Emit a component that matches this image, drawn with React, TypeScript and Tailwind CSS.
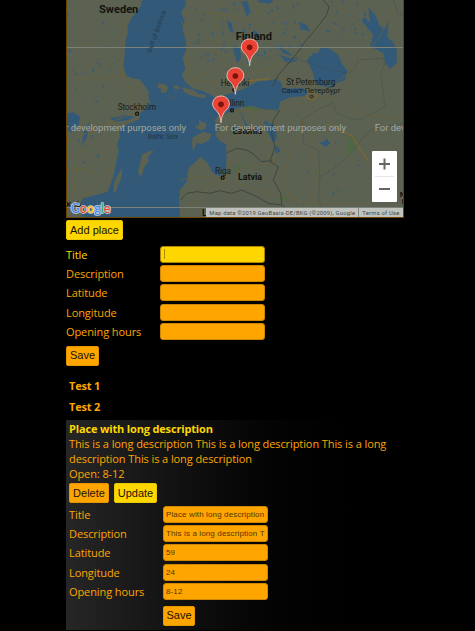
import React from "react";

const ROADS = [
  "M70 0 L78 60 L95 120 L82 170 L88 205",
  "M200 60 L195 110 L189 150 L187 228 L205 260 L215 310 L232 340",
  "M30 245 L50 232 L80 238 L130 232 L187 230",
  "M232 340 L190 350 L150 375 L90 400 L65 440 L50 500 L40 590 L20 640",
  "M150 420 L135 460 L140 520 L95 570 L60 600",
  "M20 430 L60 410 L120 380 L190 350",
  "M365 60 L380 130 L378 195 L405 240 L460 245 L520 255",
  "M405 240 L450 210 L480 180 L530 220 L525 265",
  "M475 0 L480 40 L465 90 L478 180",
  "M520 255 L570 240 L630 235 L700 235",
  "M530 220 L600 215 L700 180 L740 150",
  "M570 190 L560 120 L600 60 L590 0",
  "M380 0 L430 40 L480 40 L560 60",
  "M640 20 L650 80 L630 130",
  "M755 290 L700 325 L660 330 L600 330 L520 335",
  "M755 290 L790 340 L830 385 L880 420 L920 480 L960 540",
  "M755 290 L730 350 L725 390 L690 450 L670 540 L700 620",
  "M755 290 L840 300 L900 340 L1030 360",
  "M755 290 L860 225 L900 180 L960 110 L1000 20",
  "M520 335 L530 390 L510 450 L500 530",
  "M488 535 L440 560 L400 610 L375 650",
  "M488 535 L560 500 L640 490",
  "M488 535 L560 560 L650 585 L760 610 L930 610",
  "M488 535 L510 590 L540 650",
  "M360 540 L410 530 L488 535",
  "M560 320 L600 370 L640 490",
  "M760 390 L750 470 L770 540 L745 620",
  "M0 510 L60 505 L110 520",
];

const BORDERS = [
  "M790 0 L807 20 L800 45 L765 90 L735 125 L715 155 L690 185 L655 225 L638 258",
  "M502 458 L530 445 L560 450 L580 462 L605 485 L635 482",
  "M660 330 L640 360 L635 400 L645 440 L630 485 L655 500 L640 540 L662 580 L665 615 L690 635 L715 625 L725 654",
  "M362 600 L380 580 L410 575 L450 580 L480 572 L515 580 L545 570 L590 590 L625 610 L665 615",
];

const LAKES = [
  "M785 140 L810 146 L835 165 L845 190 L862 212 L855 240 L832 248 L812 265 L785 258 L765 245 L758 215 L740 182 L760 158 L772 160 Z",
  "M925 22 L948 48 L960 80 L975 85 L985 62 L982 110 L1000 128 L1010 150 L1010 190 L990 206 L976 190 L970 160 L930 138 L940 105 L905 62 L912 50 L930 70 Z",
  "M618 375 L635 370 L647 382 L650 415 L640 428 L622 396 Z",
  "M642 434 L660 447 L660 456 L648 460 Z",
  "M777 427 L793 425 L798 414 L805 424 L812 430 L796 441 Z",
  "M18 340 L40 337 L60 350 L54 385 L40 370 L35 400 L18 390 Z",
  "M88 365 L82 410 L65 445 L72 395 Z",
  "M150 355 L195 345 L225 350 L205 360 L165 366 Z",
  "M520 135 L540 145 L543 175 L532 190 L524 165 Z",
  "M577 90 L592 95 L600 120 L585 108 Z",
  "M660 165 L690 175 L715 170 L705 185 L680 190 Z",
  "M655 140 L685 155 L700 168 L670 160 Z",
  "M545 5 L562 2 L570 35 L560 50 Z",
  "M500 60 L515 70 L520 100 L508 90 Z",
  "M535 325 L560 372 L566 376 L557 378 Z",
  "M610 370 L616 362 L628 368 L620 374 Z",
  "M590 0 L640 0 L632 10 L600 8 Z",
  "M715 65 L740 75 L750 95 L725 86 Z",
];

const ISLES = [
  "M247 462 L282 450 L264 472 L266 485 L252 502 L243 533 L234 515 L240 490 Z",
  "M187 500 L185 530 L168 572 L160 582 L163 545 Z",
  "M417 360 L427 366 L440 370 L436 386 L420 391 L404 380 L418 374 Z",
  "M398 412 L430 395 L455 403 L447 420 L425 432 L410 428 L400 454 L396 438 Z",
  "M295 250 L312 252 L325 262 L318 278 L300 276 L306 266 L292 264 Z",
  "M342 256 L360 260 L356 268 L343 266 Z",
  "M365 262 L400 270 L415 282 L440 286 L432 295 L398 288 L375 278 Z",
  "M330 290 L338 292 L334 297 Z",
];

type Blob = { x: number; y: number; rx: number; ry: number; a: number };

function scatter(seed: number, n: number, x0: number, y0: number, w: number, h: number): Blob[] {
  let s = seed;
  const next = () => {
    s = (s * 16807) % 2147483647;
    return s / 2147483647;
  };
  return Array.from({ length: n }, () => ({
    x: x0 + next() * w,
    y: y0 + next() * h,
    rx: 1.5 + next() * 4.5,
    ry: 1 + next() * 2,
    a: 20 + next() * 60,
  }));
}

const PONDS = [
  ...scatter(77, 26, 24, 5, 160, 300),
  ...scatter(912, 90, 480, 5, 250, 190),
  ...scatter(31, 22, 392, 10, 100, 190),
  ...scatter(645, 26, 800, 0, 130, 110),
  ...scatter(205, 16, 680, 360, 240, 280),
  ...scatter(88, 10, 25, 400, 120, 150),
];

const COAST = scatter(4242, 26, 340, 255, 150, 35);

const FORESTS = scatter(1501, 34, 510, 320, 400, 310);

function Pin({ x, y }: { x: number; y: number }) {
  return (
    <g transform={`translate(${x} ${y})`}>
      <path
        d="M0 0 C-2 -20 -6 -27 -14 -36 C-21 -43 -25 -48 -25 -56 C-25 -70 -14 -80 0 -80 C14 -80 25 -70 25 -56 C25 -48 21 -43 14 -36 C6 -27 2 -20 0 0 Z"
        fill="#ea4335"
        stroke="#f3d3cf"
        strokeWidth="2.5"
      />
      <circle cx="0" cy="-55" r="8.5" fill="#7c140d" />
    </g>
  );
}

function MapView() {
  return (
    <div className="relative h-[218px] w-[338px] overflow-hidden border-x border-b border-[#6b4500]">
      <svg className="block h-[217px] w-[336px]" viewBox="21 0 1008 651" fontFamily="Roboto, sans-serif">
        <rect x="18" width="1014" height="654" fill="#5c6252" />
        <path
          fill="#335978"
          d="M248 0 L240 22 L224 42 L210 62 L202 82 L203 104 L196 120 L194 160 L190 200 L198 225 L215 235 L238 238 L255 258 L266 275 L265 292 L272 305 L264 325 L240 338 L238 358 L210 370 L192 378 L178 395 L180 410 L170 432 L176 452 L168 490 L160 530 L143 575 L112 584 L70 594 L62 606 L70 622 L64 654 L360 654 L357 600 L360 570 L380 545 L386 505 L422 470 L442 488 L458 518 L478 528 L498 520 L500 470 L498 432 L480 424 L466 405 L475 385 L463 360 L480 342 L505 338 L530 325 L575 318 L610 328 L655 334 L660 306 L690 292 L735 288 L742 278 L730 264 L668 266 L664 248 L650 236 L622 242 L594 244 L570 258 L548 268 L520 278 L495 285 L470 296 L455 286 L425 272 L400 266 L375 246 L366 225 L376 205 L368 175 L382 145 L378 115 L368 90 L374 60 L362 40 L378 15 L376 0 Z"
        />
        {LAKES.map((d) => (
          <path key={d} d={d} fill="#335978" />
        ))}
        {PONDS.map((p, i) => (
          <ellipse key={i} cx={p.x} cy={p.y} rx={p.rx} ry={p.ry} fill="#365c79" transform={`rotate(${p.a} ${p.x} ${p.y})`} />
        ))}
        {ISLES.map((d) => (
          <path key={d} d={d} fill="#5c6252" />
        ))}
        {COAST.map((p, i) => (
          <circle key={i} cx={p.x} cy={p.y} r={p.ry} fill="#5c6252" />
        ))}
        {FORESTS.map((p, i) => (
          <ellipse key={i} cx={p.x} cy={p.y} rx={p.rx} ry={p.ry * 1.5} fill="#4d6a43" opacity="0.45" />
        ))}
        <path d="M865 412 L885 408 L890 435 L875 465 L863 460 Z M525 500 L548 488 L540 510 L520 520 Z M548 322 L575 318 L600 330 L570 332 Z M660 585 L682 592 L680 602 L662 603 Z" fill="#4c6a43" opacity="0.75" />
        <g fill="none" stroke="#6b6038" strokeWidth="2">
          {ROADS.map((d) => (
            <path key={d} d={d} />
          ))}
        </g>
        <path d="M800 372 L840 390 L876 408 L895 440 L925 482 M525 250 L570 242 L630 236" fill="none" stroke="#826a30" strokeWidth="3" />
        <ellipse cx="755" cy="288" rx="16" ry="9" fill="none" stroke="#826a30" strokeWidth="3" />
        <g fill="none" stroke="#363b33" strokeWidth="2.2">
          {BORDERS.map((d) => (
            <path key={d} d={d} />
          ))}
        </g>
        <g fill="none" stroke="#41463c" strokeWidth="1.6" strokeDasharray="5 3">
          <path d="M720 178 L790 205 L866 220 L885 205 L895 180 L970 175 L975 192 L962 220 L975 320 L900 360 L870 355 L830 340 L820 310 L780 325 L725 360 L730 430 L775 450 L780 530 L830 500 L880 450 L930 390 L1030 370" />
          <path d="M1000 0 L1015 40 L1032 45 M780 530 L775 600 L800 650" />
        </g>
        <path d="M18 142.5 H1032 M18 622.5 H1032" stroke="#7d8279" strokeWidth="3" />
        <g fill="none" stroke="#151713" strokeWidth="4">
          <circle cx="231" cy="341" r="4.5" />
          <circle cx="516" cy="331" r="4.5" />
          <circle cx="488" cy="533" r="4.5" />
          <circle cx="755" cy="290" r="4" strokeWidth="2.5" />
          <circle cx="523" cy="270" r="4.5" />
        </g>
        <g fill="#12140f" fontWeight="700">
          <text x="117" y="38" fontSize="33" textLength="118" lengthAdjust="spacingAndGlyphs">Sweden</text>
          <text x="527" y="119" fontSize="33" textLength="109" lengthAdjust="spacingAndGlyphs">Finland</text>
          <text x="518" y="402" fontSize="27" textLength="88" lengthAdjust="spacingAndGlyphs">Estonia</text>
          <text x="534" y="540" fontSize="27" textLength="72" lengthAdjust="spacingAndGlyphs">Latvia</text>
          <text x="426" y="647" fontSize="28">L</text>
          <text x="1019" y="590" fontSize="24">N</text>
          <text x="1025" y="613" fontSize="24">N</text>
          <text x="18" y="620" fontSize="24" textLength="45">Kob</text>
        </g>
        <g fill="#1a1c18">
          <text x="173" y="329" fontSize="25" textLength="115" lengthAdjust="spacingAndGlyphs">Stockholm</text>
          <text x="482" y="258" fontSize="25" textLength="86" lengthAdjust="spacingAndGlyphs">Helsinki</text>
          <text x="484" y="319" fontSize="25" textLength="68" lengthAdjust="spacingAndGlyphs">Tallinn</text>
          <text x="465" y="522" fontSize="25" textLength="48" lengthAdjust="spacingAndGlyphs">Riga</text>
          <text x="679" y="256" fontSize="25" textLength="147" lengthAdjust="spacingAndGlyphs">St Petersburg</text>
          <text x="665" y="279" fontSize="23" textLength="177" lengthAdjust="spacingAndGlyphs">Санкт-Петербург</text>
        </g>
        <text x="263" y="417" fontSize="20" textLength="90" lengthAdjust="spacingAndGlyphs" fill="#20374a">Baltic Sea</text>
        <text transform="translate(273 160) rotate(-70)" fontSize="20" textLength="134" lengthAdjust="spacingAndGlyphs" fill="#213b50">Gulf of Bothnia</text>
        <g fill="#a2a7a1" fontSize="27" fontFamily="Roboto, Arial, sans-serif">
          <text x="-16" y="392" textLength="394" lengthAdjust="spacingAndGlyphs">For development purposes only</text>
          <text x="464" y="392" textLength="394" lengthAdjust="spacingAndGlyphs">For development purposes only</text>
          <text x="944" y="392" textLength="394" lengthAdjust="spacingAndGlyphs">For development purposes only</text>
        </g>
        <Pin x={569} y={197} />
        <Pin x={526} y={283} />
        <Pin x={483} y={368} />
        <text x="32" y="638" fontSize="38" fontWeight="500" textLength="119" stroke="#c3cbd2" strokeWidth="5" paintOrder="stroke" strokeLinejoin="round" fontFamily="Lato, sans-serif">
          <tspan fill="#4285f4">G</tspan>
          <tspan fill="#ea4335">o</tspan>
          <tspan fill="#fbbc05">o</tspan>
          <tspan fill="#4285f4">g</tspan>
          <tspan fill="#34a853">l</tspan>
          <tspan fill="#ea4335">e</tspan>
        </text>
        <rect x="438" y="624" width="594" height="30" fill="#c0c2bd" />
        <rect x="894" y="624" width="2.5" height="30" fill="#777a73" />
        <g fill="#42443f" fontSize="17.5">
          <text x="448" y="645" textLength="437">Map data ©2019 GeoBasis-DE/BKG (©2009), Google</text>
          <text x="907" y="645" textLength="111">Terms of Use</text>
        </g>
      </svg>
      <div className="absolute top-[151px] right-[6px] flex h-[51px] w-[25px] flex-col items-center rounded-[1px] bg-white">
        <svg className="h-[25px] w-[25px]" viewBox="0 0 25 25" stroke="#666" strokeWidth="2">
          <path d="M7 13 H18 M12.5 7.5 V18.5" />
        </svg>
        <div className="h-px w-[19px] bg-[#e6e6e6]" />
        <svg className="h-[25px] w-[25px]" viewBox="0 0 25 25" stroke="#666" strokeWidth="2">
          <path d="M7 12 H18" />
        </svg>
      </div>
    </div>
  );
}

function Button({ label, className }: { label: string; className: string }) {
  return (
    <button
      className={`flex h-5 items-center justify-center rounded-[2px] border font-['Liberation_Sans',Arial,sans-serif] text-[11px] leading-none tracking-normal whitespace-nowrap text-[#1a1100] ${className}`}
    >
      {label}
    </button>
  );
}

const ORANGE = "border-[#e69500] bg-[#ffa500]";
const YELLOW = "border-[#ecc800] bg-[#ffd700]";

function Field({ label, value, active }: { label: string; value?: string; active?: boolean }) {
  return (
    <label className={`flex h-[19.4px] items-center ${active ? "text-[#ffd700]" : "text-[#ffa500]"}`}>
      <span className="w-[94px] leading-[15px]">{label}</span>
      <span
        className={`flex h-[17px] w-[105px] items-center overflow-hidden rounded-[3px] border px-[2px] font-['Liberation_Sans',Arial,sans-serif] text-[8px] tracking-[0.13px] whitespace-nowrap text-[#543600] ${
          active ? "border-[#b08400] bg-[#ffd700]" : "border-[#d08700] bg-[#ffa500]"
        }`}
      >
        {active && <span className="ml-px h-[10px] w-px bg-[#a88e00]" />}
        <span className="min-w-0 overflow-hidden">{value}</span>
      </span>
    </label>
  );
}

export default function App() {
  return (
    <main className="flex h-[631px] w-[475px] flex-col overflow-hidden bg-black pl-[66px] font-['Open_Sans','Noto_Sans',sans-serif] text-[11px] leading-[15px] tracking-[-0.09px] text-[#ffa500]">
      <MapView />
      <div className="pt-[2px]">
        <Button label="Add place" className={`w-[57px] ${YELLOW}`} />
      </div>
      <form className="pt-[4.5px]">
        <Field label="Title" active />
        <Field label="Description" />
        <Field label="Latitude" />
        <Field label="Longitude" />
        <Field label="Opening hours" />
        <div className="pt-[4.5px]">
          <Button label="Save" className={`w-[33px] ${ORANGE}`} />
        </div>
      </form>
      <div className="flex flex-col gap-[6px] pt-[12.5px] pb-[6px] pl-[3px] font-bold tracking-[-0.2px]">
        <div>Test 1</div>
        <div>Test 2</div>
      </div>
      <section className="h-[210px] w-[338px] bg-linear-to-r from-[#262626] to-black pt-[1px] pl-[3px]">
        <h2 className="font-bold tracking-[-0.16px] text-[#ffd700]">Place with long description</h2>
        <p>
          This is a long description This is a long description This is a long
          <br />
          description This is a long description
        </p>
        <p>Open: 8-12</p>
        <div className="flex gap-[5px] pt-[2px]">
          <Button label="Delete" className={`w-[40px] ${ORANGE}`} />
          <Button label="Update" className={`w-[43px] ${YELLOW}`} />
        </div>
        <form className="pt-[1px]">
          <Field label="Title" value="Place with long description" />
          <Field label="Description" value="This is a long description This is a long description" />
          <Field label="Latitude" value="59" />
          <Field label="Longitude" value="24" />
          <Field label="Opening hours" value="8-12" />
          <div className="pt-[4.5px] pl-[94px]">
            <Button label="Save" className={`w-[32px] ${ORANGE}`} />
          </div>
        </form>
      </section>
    </main>
  );
}
